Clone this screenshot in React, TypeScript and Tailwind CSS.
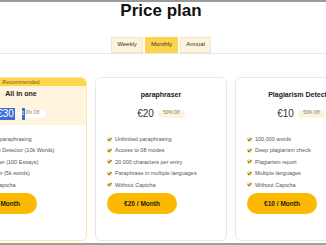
import React from "react";

type Plan = {
  name: string;
  price: string;
  features: string[];
  rec?: boolean;
};

const plans: Plan[] = [
  {
    name: "All in one",
    price: "€30",
    rec: true,
    features: [
      "Unlimited paraphrasing",
      "Plagiarism Detector (10k Words)",
      "Summariser (100 Essays)",
      "AI Detector (5k words)",
      "Without Captcha",
    ],
  },
  {
    name: "paraphraser",
    price: "€20",
    features: [
      "Unlimited paraphrasing",
      "Access to 08 modes",
      "20,000 characters per entry",
      "Paraphrase in multiple languages",
      "Without Captcha",
    ],
  },
  {
    name: "Plagiarism Detector",
    price: "€10",
    features: [
      "100,000 words",
      "Deep plagiarism check",
      "Plagiarism report",
      "Multiple languages",
      "Without Captcha",
    ],
  },
];

function Check() {
  return (
    <svg width="5" height="5" viewBox="0 0 10 10" className="shrink-0">
      <circle cx="5" cy="5" r="5" fill="#fde68a" />
      <path d="M1.8 5.2 L4 7.4 L8.4 2.6" stroke="#1f2a44" strokeWidth="1.8" fill="none" strokeLinecap="round" strokeLinejoin="round" />
    </svg>
  );
}

function Card({ plan }: { plan: Plan }) {
  const rec = !!plan.rec;
  return (
    <div
      className={`w-[132px] h-[164px] shrink-0 rounded-[6px] border overflow-hidden flex flex-col ${
        rec ? "border-[#fde6a4]" : "border-[#e8e8e8]"
      }`}
    >
      <div className={`h-[47px] shrink-0 flex flex-col items-center ${rec ? "bg-[#fff5de]" : "bg-white"}`}>
        {rec && (
          <div className="w-full h-[8px] bg-[#fdd54f] text-[5.5px] leading-[8px] text-center text-[#7a5a12]">
            Recommended
          </div>
        )}
        <div
          className={`${rec ? "mt-[3.5px]" : "mt-[12.5px]"} text-[7px] leading-[9px] font-bold text-[#222]`}
        >
          {plan.name}
        </div>
        <div className={`${rec ? "mt-[9.5px]" : "mt-[8.5px]"} h-[12px] flex items-center gap-[3px]`}>
          {rec ? (
            <span className="text-[10px] leading-[12px] text-white bg-[#3c6fd6] px-[1px]">{plan.price}</span>
          ) : (
            <span className="text-[10px] leading-[12px] text-[#333]">{plan.price}</span>
          )}
          <span
            className={`ml-[1px] h-[8px] w-[27px] rounded-full flex items-center justify-center text-[4.5px] text-[#777] ${
              rec ? "bg-white" : "bg-[#fdf3dc]"
            }`}
          >
            {rec ? (
              <>
                <span className="bg-[#3c6fd6] text-white inline-block h-[12px] leading-[12px] w-[3px] -ml-[4px] mr-[1px]">5</span>
                0% Off
              </>
            ) : (
              "50% Off"
            )}
          </span>
        </div>
      </div>
      <div className="px-[11px] pt-[9px] flex flex-col">
        {plan.features.map((f) => (
          <div key={f} className="h-[11.4px] flex items-center gap-[3px] whitespace-nowrap">
            <Check />
            <span className="text-[5.5px] text-[#555]">{f}</span>
          </div>
        ))}
        <div className="mt-[2.5px] w-[70px] h-[21px] rounded-full bg-[#fcb900] flex items-center justify-center text-[6.5px] font-bold text-[#222] whitespace-nowrap">
          {plan.price} / Month
        </div>
      </div>
    </div>
  );
}

export default function App() {
  return (
    <div
      className="w-[326px] h-[245px] overflow-hidden bg-white flex flex-col"
      style={{ fontFamily: '"Liberation Sans", Arial, sans-serif' }}
    >
      <div className="h-[1.5px] bg-[#9b9b9b] shrink-0" />
      <div className="w-[322px] flex flex-col items-center shrink-0">
        <div className="text-[17px] leading-[20px] font-bold text-[#111] -mt-[1px]">Price plan</div>
        <div className="mt-[16px] flex gap-[2px] items-end">
          {["Weekly", "Monthly", "Annual"].map((t) => (
            <div
              key={t}
              className={`h-[16px] flex items-center justify-center text-[6px] text-[#333] border ${
                t === "Monthly"
                  ? "w-[33px] bg-[#fdd34d] border-[#fdd34d]"
                  : t === "Weekly"
                  ? "w-[32px] bg-[#fef3dc] border-[#f3e6c6]"
                  : "w-[31px] bg-[#fef3dc] border-[#f3e6c6]"
              }`}
            >
              {t}
            </div>
          ))}
        </div>
      </div>
      <div className="h-[1px] bg-[#e8e8e8] shrink-0" />
      <div className="mt-[23px] ml-[-45px] flex gap-[8px] shrink-0">
        {plans.map((p) => (
          <Card key={p.name} plan={p} />
        ))}
      </div>
      <div className="flex-1" />
      <div className="h-[2px] bg-[#a0a0a0] shrink-0" />
    </div>
  );
}
